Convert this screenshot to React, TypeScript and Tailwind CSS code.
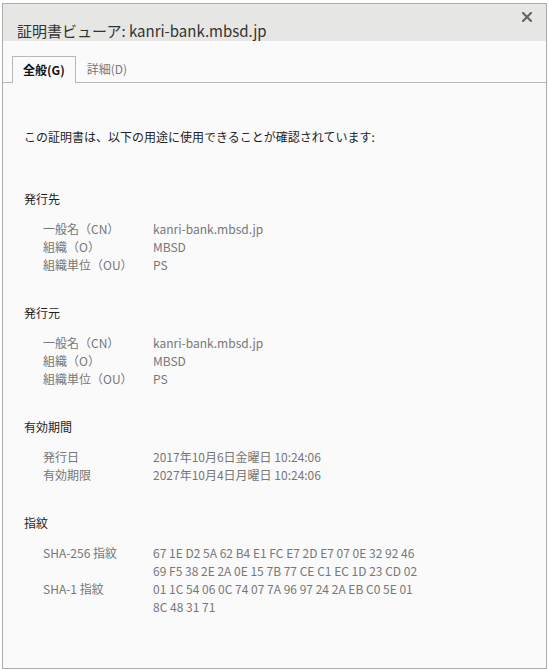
import React from 'react';

type Row = { label: string; value: string[] };
type Section = { title: string; rows: Row[] };

const sections: Section[] = [
  {
    title: '発行先',
    rows: [
      { label: '一般名（CN）', value: ['kanri-bank.mbsd.jp'] },
      { label: '組織（O）', value: ['MBSD'] },
      { label: '組織単位（OU）', value: ['PS'] },
    ],
  },
  {
    title: '発行元',
    rows: [
      { label: '一般名（CN）', value: ['kanri-bank.mbsd.jp'] },
      { label: '組織（O）', value: ['MBSD'] },
      { label: '組織単位（OU）', value: ['PS'] },
    ],
  },
  {
    title: '有効期間',
    rows: [
      { label: '発行日', value: ['2017年10月6日金曜日 10:24:06'] },
      { label: '有効期限', value: ['2027年10月4日月曜日 10:24:06'] },
    ],
  },
  {
    title: '指紋',
    rows: [
      {
        label: 'SHA-256 指紋',
        value: [
          '67 1E D2 5A 62 B4 E1 FC E7 2D E7 07 0E 32 92 46',
          '69 F5 38 2E 2A 0E 15 7B 77 CE C1 EC 1D 23 CD 02',
        ],
      },
      {
        label: 'SHA-1 指紋',
        value: ['01 1C 54 06 0C 74 07 7A 96 97 24 2A EB C0 5E 01', '8C 48 31 71'],
      },
    ],
  },
];

const CertSection: React.FC<{ section: Section }> = ({ section }) => (
  <>
    <div className="text-[12px] leading-[18px] text-[#1e1e1e]">{section.title}</div>
    <div className="mt-[12px] ml-[19px] grid grid-cols-[110px_1fr] text-[12px] leading-[18px] text-[#777]">
      {section.rows.map((row, i) => (
        <React.Fragment key={i}>
          <div>{row.label}</div>
          <div>
            {row.value.map((line, j) => (
              <div key={j}>{line}</div>
            ))}
          </div>
        </React.Fragment>
      ))}
    </div>
  </>
);

const App: React.FC = () => {
  return (
    <div
      className="w-[549px] h-[670px] bg-white overflow-hidden pt-[3px] pl-[2px]"
      style={{ fontFamily: '"Noto Sans CJK JP", "Noto Sans", sans-serif' }}
    >
      <div className="w-[545px] h-[666px] border border-[#ababab] bg-[#fafafa] flex flex-col">
        {/* header */}
        <div className="relative h-[37px] bg-[#e6e6e4] pt-[17px] pl-[14px]">
          <h1 className="text-[15px] leading-[20px] text-[#333]">証明書ビューア: kanri-bank.mbsd.jp</h1>
          <button className="absolute right-[14px] top-[8px] text-[#666]">
            <svg width="10" height="10" viewBox="0 0 10 10">
              <path d="M1 1 L9 9 M9 1 L1 9" stroke="currentColor" strokeWidth="2.2" strokeLinecap="square" />
            </svg>
          </button>
        </div>

        {/* tabs */}
        <div className="flex items-end pt-[14px] pl-[9px] border-b border-[#b8b8b8]">
          <div className="h-[27px] -mb-px px-[10px] flex items-center border border-b-0 border-[#b8b8b8] bg-[#fafafa] text-[12px] font-bold text-[#111]">
            全般(G)
          </div>
          <div className="h-[27px] px-[11px] flex items-center text-[12px] text-[#777]">詳細(D)</div>
        </div>

        {/* content */}
        <div className="pl-[21px]">
          <p className="mt-[45px] text-[12px] leading-[18px] text-[#222]">
            この証明書は、以下の用途に使用できることが確認されています:
          </p>
          {sections.map((s, i) => (
            <div key={i} className={i === 0 ? 'mt-[44px]' : 'mt-[30px]'}>
              <CertSection section={s} />
            </div>
          ))}
        </div>
      </div>
    </div>
  );
};

export default App;
